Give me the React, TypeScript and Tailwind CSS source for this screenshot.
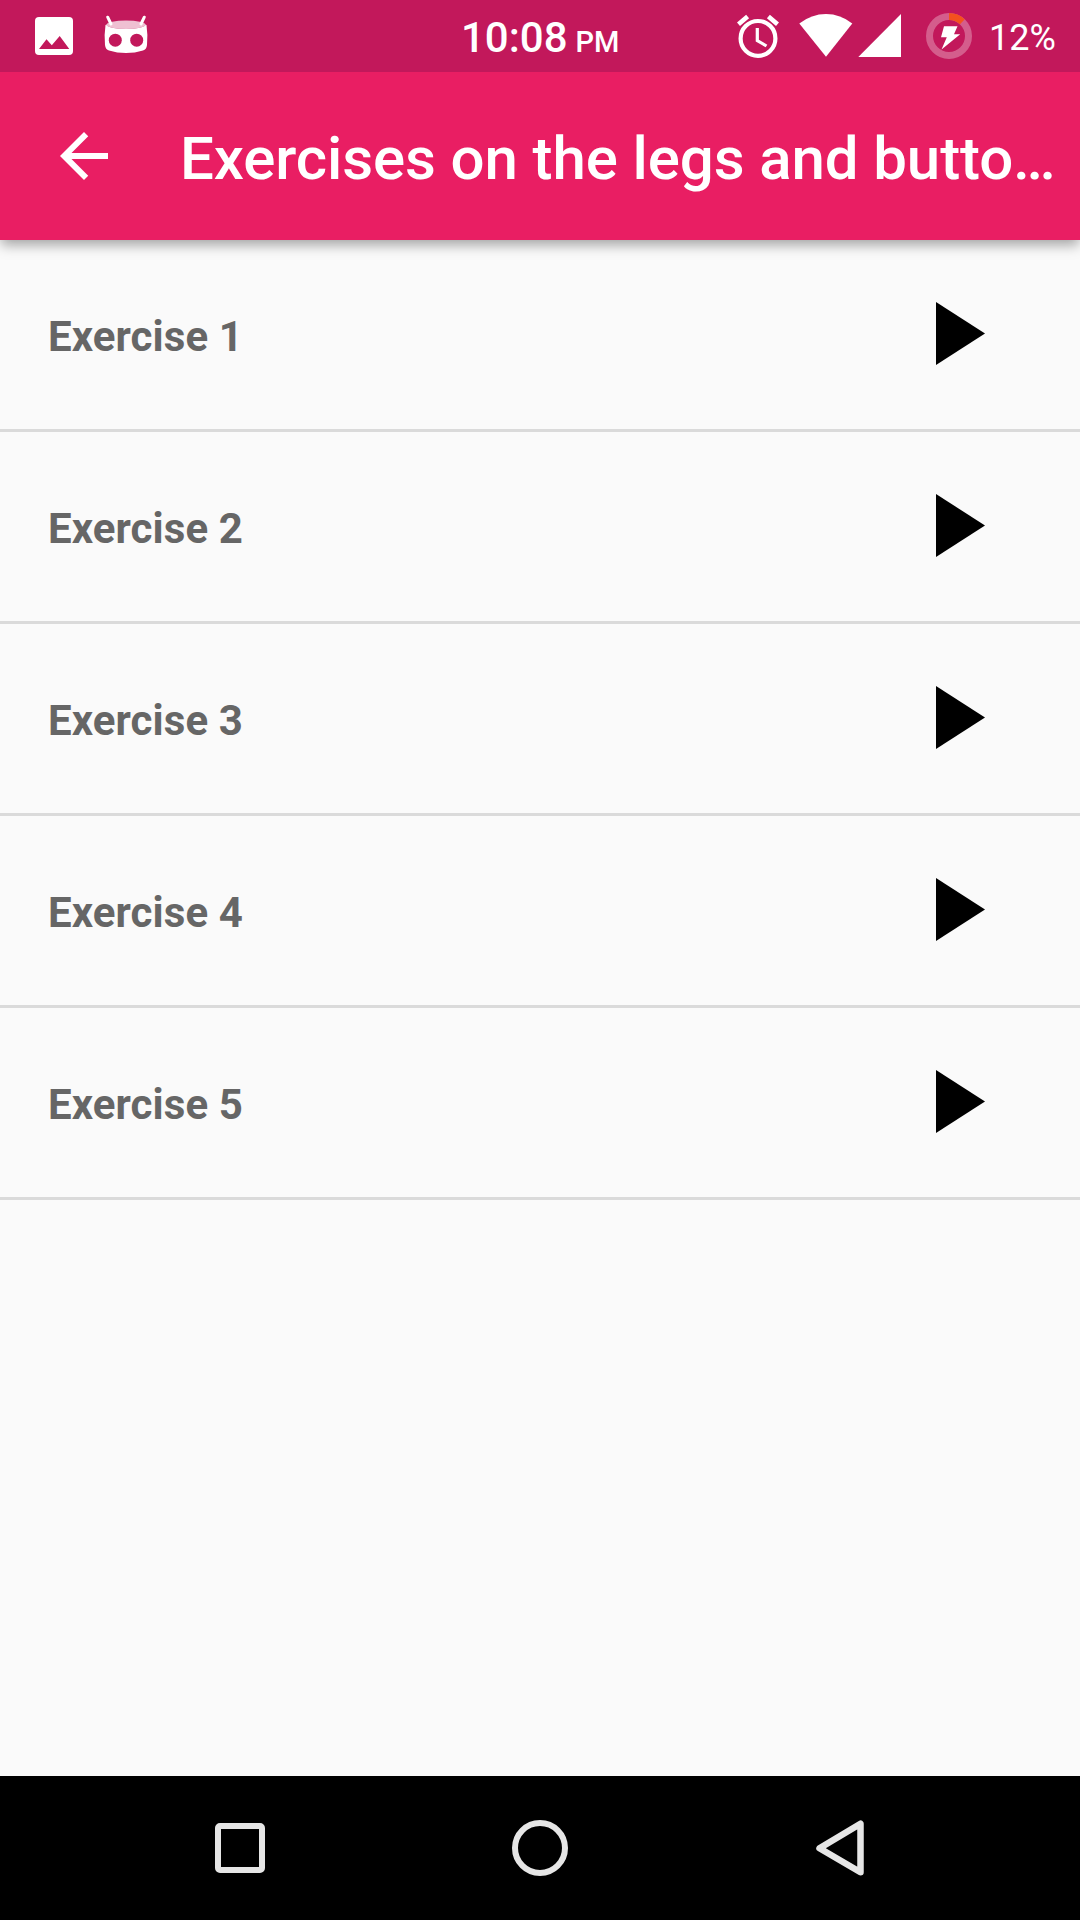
interface Exercise {
  id: number;
  title: string;
}

const exercises: Exercise[] = [
  { id: 1, title: "Exercise 1" },
  { id: 2, title: "Exercise 2" },
  { id: 3, title: "Exercise 3" },
  { id: 4, title: "Exercise 4" },
  { id: 5, title: "Exercise 5" },
];

function PictureIcon() {
  return (
    <svg width="38" height="38" viewBox="0 0 38 38">
      <rect width="38" height="38" rx="4" fill="#fff" />
      <path d="M4 32 11.5 22.2 16.8 28.2 24.7 19 34.3 32Z" fill="#c2185b" />
    </svg>
  );
}

function RobotIcon() {
  return (
    <svg width="44" height="40" viewBox="0 0 44 40">
      <path
        d="M1.5 10Q10 6 22 6T42.5 10Q44 20 43 30Q42.5 34.5 39 35.5Q31 38 22 38T5 35.5Q1.5 34.5 1 30Q0 20 1.5 10Z"
        fill="#fff"
      />
      <ellipse cx="22" cy="9.8" rx="19.5" ry="4.2" fill="#c2185b" />
      <ellipse cx="22" cy="9.8" rx="19.5" ry="4.2" fill="#fff" fillOpacity="0.73" />
      <path d="M3.7 2.2 7 9M40.3 2.2 37 9" stroke="#fff" strokeWidth="3" strokeLinecap="round" />
      <circle cx="11.3" cy="25.2" r="6.5" fill="#c2185b" />
      <circle cx="32.7" cy="25.2" r="6.5" fill="#c2185b" />
    </svg>
  );
}

function AlarmIcon() {
  return (
    <svg width="42" height="44" viewBox="0 0 42 44" fill="none" stroke="#fff">
      <circle cx="21" cy="24.4" r="17.4" strokeWidth="4.2" />
      <path d="M1.5 10.3 10.6 2.6M40.5 10.3 31.4 2.6" strokeWidth="4.6" />
      <path d="M20.3 14V26.5L29.5 32" strokeWidth="3.2" />
    </svg>
  );
}

function WifiIcon() {
  return (
    <svg width="54" height="43" viewBox="0 0 54 43">
      <path d="M0.3 9.5Q12.5 0 27 0T53.3 9.5L27 42.7Z" fill="#fff" />
    </svg>
  );
}

function SignalIcon() {
  return (
    <svg width="43" height="43" viewBox="0 0 43 43">
      <path d="M0.3 43 43 0V43Z" fill="#fff" />
    </svg>
  );
}

function BatteryIcon() {
  return (
    <svg width="46" height="46" viewBox="0 0 46 46">
      <circle cx="23" cy="23" r="19.5" fill="none" stroke="#fff" strokeOpacity="0.3" strokeWidth="7" />
      <path d="M23 3.5A19.5 19.5 0 0 1 36.35 8.8" fill="none" stroke="#f4511e" strokeWidth="7" />
      <path d="M18 13.2H31.5L28 21.3H34.2L15.5 36.5 20.8 24.3H15Z" fill="#fff" />
    </svg>
  );
}

function StatusBar() {
  return (
    <div className="relative z-20 flex h-[72px] items-start bg-[#c2185b] text-white">
      <div className="flex w-[461px] gap-[31px] pl-[35px]">
        <div className="pt-[17px]">
          <PictureIcon />
        </div>
        <div className="pt-[15px]">
          <RobotIcon />
        </div>
      </div>
      <div className="flex w-[276px] items-baseline gap-[8px] pt-[13px] font-medium whitespace-nowrap">
        <span className="text-[42px] leading-[49px]">10:08</span>
        <span className="text-[29px] leading-[34px]">PM</span>
      </div>
      <div className="flex">
        <div className="pt-[14px]">
          <AlarmIcon />
        </div>
        <div className="pt-[14px] pl-[20px]">
          <WifiIcon />
        </div>
        <div className="pt-[14px] pl-[5px]">
          <SignalIcon />
        </div>
        <div className="pt-[13px] pl-[25px]">
          <BatteryIcon />
        </div>
        <span className="pt-[17px] pl-[17px] text-[36px] leading-[42px]">12%</span>
      </div>
    </div>
  );
}

function AppBar() {
  return (
    <header className="relative z-10 flex h-[168px] items-center bg-[#e91e63] pl-[48px] text-white shadow-[0_6px_12px_-1px_rgba(0,0,0,0.35)]">
      <button className="size-[72px]">
        <svg width="72" height="72" viewBox="0 0 24 24" fill="#fff">
          <path d="M20 11H7.83l5.59-5.59L12 4l-8 8 8 8 1.41-1.41L7.83 13H20v-2z" />
        </svg>
      </button>
      <h1 className="pt-[5px] pl-[60px] text-[60px] leading-[70px] font-medium tracking-[-0.11px] whitespace-nowrap">
        Exercises on the legs and butto…
      </h1>
    </header>
  );
}

function NavigationBar() {
  return (
    <nav className="grid h-[144px] grid-cols-3 place-items-center bg-black px-[90px]">
      <button className="size-[50px] rounded-[5px] border-[6px] border-[#e6e6e6]" />
      <button className="size-[56px] rounded-full border-[6px] border-[#e6e6e6]" />
      <button>
        <svg width="48" height="56" viewBox="0 0 48 56" fill="none">
          <path d="M44.5 3.7V52.3L3.5 28.3Z" stroke="#e6e6e6" strokeWidth="6.5" strokeLinejoin="round" />
        </svg>
      </button>
    </nav>
  );
}

export default function App() {
  return (
    <div className="flex h-[1920px] w-[1080px] flex-col overflow-hidden bg-[#fafafa] font-[Roboto,sans-serif]">
      <StatusBar />
      <AppBar />
      <ul className="flex-1">
        {exercises.map((exercise) => (
          <li
            key={exercise.id}
            className="flex h-[192px] items-center justify-between border-b-[3px] border-[#dadada] pr-[95px] pl-[48px]"
          >
            <span className="pt-[4px] text-[42px] leading-[49px] font-bold tracking-[0.08px] text-[#666666]">
              {exercise.title}
            </span>
            <svg className="mb-[2px]" width="49" height="63" viewBox="0 0 49 63">
              <path d="M0 0 49 31.5 0 63Z" fill="#000" />
            </svg>
          </li>
        ))}
      </ul>
      <NavigationBar />
    </div>
  );
}
